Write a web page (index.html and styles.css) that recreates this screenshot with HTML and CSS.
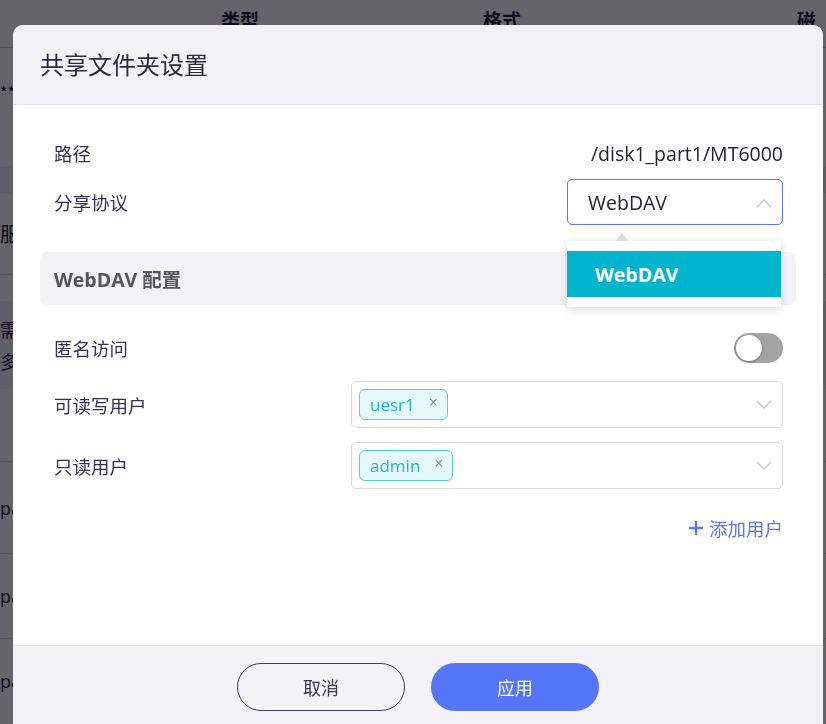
FILE: index.html
```html
<!DOCTYPE html>
<html lang="zh">
<head>
<meta charset="utf-8">
<title>共享文件夹设置</title>
<link rel="stylesheet" href="styles.css">
</head>
<body>
<div class="page">
  <div class="thead">
    <span class="th th-type">类型</span>
    <span class="th th-fmt">格式</span>
    <span class="th th-disk">磁</span>
  </div>
  <div class="bg-row bg-r1"><span class="stars">**</span></div>
  <div class="bg-band"></div>
  <div class="bg-row bg-r2"><span class="big">服</span></div>
  <div class="bg-gap"></div>
  <div class="bg-info"><span>需</span><span>多</span></div>
  <div class="bg-row bg-r3"></div>
  <div class="bg-row bg-pa"><span>pa</span></div>
  <div class="bg-row bg-pa2"><span>pa</span></div>
  <div class="bg-row bg-pa3"><span>pa</span></div>
</div>
<div class="mask"></div>

<div class="modal">
  <div class="modal-header">共享文件夹设置</div>
  <div class="modal-body">
    <div class="row row-path">
      <span class="label">路径</span>
      <span class="value">/disk1_part1/MT6000</span>
    </div>
    <div class="row row-proto">
      <span class="label">分享协议</span>
      <div class="select open">
        <span class="select-text">WebDAV</span>
        <svg class="chev" width="16" height="10" viewBox="0 0 16 10"><path d="M1 9 L8 2 L15 9" fill="none" stroke="#c6c6cf" stroke-width="1.4"/></svg>
        <div class="dropdown">
          <span class="dd-arrow"></span>
          <div class="dd-item">WebDAV</div>
        </div>
      </div>
    </div>
    <div class="section">WebDAV 配置</div>
    <div class="row row-anon">
      <span class="label">匿名访问</span>
      <span class="toggle"><span class="knob"></span></span>
    </div>
    <div class="row row-users">
      <span class="label">可读写用户</span>
      <div class="multi">
        <span class="tag">uesr1<span class="x">×</span></span>
        <svg class="chev-down" width="16" height="10" viewBox="0 0 16 10"><path d="M1 1 L8 8 L15 1" fill="none" stroke="#c6c6cf" stroke-width="1.4"/></svg>
      </div>
    </div>
    <div class="row row-users row-ro">
      <span class="label">只读用户</span>
      <div class="multi">
        <span class="tag">admin<span class="x">×</span></span>
        <svg class="chev-down" width="16" height="10" viewBox="0 0 16 10"><path d="M1 1 L8 8 L15 1" fill="none" stroke="#c6c6cf" stroke-width="1.4"/></svg>
      </div>
    </div>
    <div class="row row-add">
      <span class="add">
        <svg width="16" height="16" viewBox="0 0 16 16"><path d="M8 1 V15 M1 8 H15" stroke="#5a78f5" stroke-width="2.4"/></svg>
        添加用户
      </span>
    </div>
  </div>
  <div class="modal-footer">
    <button class="btn btn-cancel">取消</button>
    <button class="btn btn-apply">应用</button>
  </div>
</div>
</body>
</html>
```

FILE: styles.css
```css
* { box-sizing: border-box; }
html, body {
  margin: 0;
  padding: 0;
  width: 826px;
  height: 724px;
  overflow: hidden;
  font-family: "Open Sans", "Noto Sans CJK SC", sans-serif;
  background: #ffffff;
}

/* background page */
.page {
  width: 826px;
  height: 724px;
  background: #fbfbfd;
  color: #222240;
  font-family: "Noto Sans CJK SC", sans-serif;
}
.thead {
  height: 48px;
  border-bottom: 1px solid #ccc;
  font-weight: 700;
  font-size: 19px;
  display: flex;
  align-items: flex-start;
  padding-top: 6px;
  white-space: nowrap;
}
.th-type { margin-left: 221px; }
.th-fmt { margin-left: 224px; }
.th-disk { margin-left: 276px; }
.bg-row {
  display: flex;
  align-items: center;
  font-size: 18px;
  color: #222240;
}
.bg-r1 { height: 119px; align-items: flex-start; padding-top: 32px; }
.stars { font-size: 16px; }
.bg-band { height: 26px; background: #ececf0; }
.bg-r2 { height: 82px; border-bottom: 1px solid #ddd; }
.big { font-size: 20px; }
.bg-gap { height: 26px; }
.bg-info {
  height: 88px;
  background: #eef0f8;
  display: flex;
  flex-direction: column;
  justify-content: center;
  font-size: 18px;
  line-height: 32px;
}
.bg-r3 { height: 73px; border-bottom: 1px solid #ddd; }
.bg-pa, .bg-pa2 { height: 92px; border-bottom: 1px solid #ddd; }
.bg-pa2 { height: 85px; }
.bg-pa3 { height: 83px; }
.bg-row.bg-pa, .bg-row.bg-pa2, .bg-row.bg-pa3 { font-family: "Open Sans", sans-serif; }

.mask {
  position: fixed;
  inset: 0;
  background: rgba(2, 0, 10, 0.6);
}

/* modal */
.modal {
  position: absolute;
  left: 13px;
  top: 25px;
  width: 810px;
  height: 720px;
  background: #ffffff;
  border-radius: 10px;
  overflow: hidden;
  display: flex;
  flex-direction: column;
}
.modal-header {
  height: 80px;
  flex: none;
  background: #f2f2f7;
  border-bottom: 1px solid #e4e4ec;
  font-family: "Noto Sans CJK SC", sans-serif;
  font-size: 24px;
  color: #2a2a48;
  padding-left: 27px;
  display: flex;
  align-items: center;
  padding-bottom: 2px;
}
.modal-body {
  height: 540px;
  flex: none;
  padding: 36px 27px 0;
}
.row {
  display: flex;
  align-items: center;
  justify-content: space-between;
  padding: 0 13px 0 14px;
}
.label {
  font-family: "Noto Sans CJK SC", sans-serif;
  font-size: 18.5px;
  color: #30305a;
}
.row-path { height: 24px; }
.value {
  font-size: 19.5px;
  color: #222236;
}
.row-proto { height: 46px; margin-top: 14px; }
.select {
  position: relative;
  width: 216px;
  height: 46px;
  border: 1px solid #5a78f5;
  border-radius: 5px;
  display: flex;
  align-items: center;
  justify-content: space-between;
  padding: 0 10px 0 20px;
}
.select-text { font-size: 19.5px; color: #222236; }
.chev { margin-top: 2px; }
.dropdown {
  position: absolute;
  left: -1px;
  top: 61px;
  width: 214px;
  padding: 10px 0;
  background: #fff;
  box-shadow: 0 2px 8px rgba(0, 0, 0, 0.16);
  border-radius: 2px;
  z-index: 5;
}
.dd-arrow {
  position: absolute;
  left: 48px;
  top: -8px;
  width: 0;
  height: 0;
  border-left: 7px solid transparent;
  border-right: 7px solid transparent;
  border-bottom: 8px solid #dcdce2;
}
.dd-item {
  height: 46px;
  background: #00b4d0;
  color: #fff;
  font-weight: 700;
  font-size: 19.5px;
  display: flex;
  align-items: center;
  padding-left: 28px;
}
.section {
  margin-top: 27px;
  height: 53px;
  background: #f2f2f7;
  border-radius: 8px;
  display: flex;
  align-items: center;
  padding-left: 14px;
  font-size: 19.5px;
  font-weight: 700;
  color: #555558;
}
.row-anon { height: 30px; margin-top: 28px; }
.toggle {
  position: relative;
  width: 49px;
  height: 30px;
  border-radius: 15px;
  background: #a3a3a3;
  display: flex;
  align-items: center;
  padding-left: 2px;
}
.knob {
  width: 26px;
  height: 26px;
  border-radius: 50%;
  background: #fff;
  box-shadow: 0 1px 3px rgba(0, 0, 0, 0.3);
}
.row-users { height: 47px; margin-top: 18px; }
.row-ro { margin-top: 14px; }
.multi {
  width: 432px;
  height: 47px;
  border: 1px solid #d9d9de;
  border-radius: 5px;
  display: flex;
  align-items: center;
  justify-content: space-between;
  padding: 0 10px 0 7px;
}
.tag {
  height: 31px;
  border: 1px solid #4fd0e3;
  background: #e6f8fc;
  border-radius: 6px;
  color: #1db8d1;
  font-size: 17px;
  display: flex;
  align-items: center;
  padding: 0 9px 0 10px;
}
.x {
  margin-left: 14px;
  color: #8a8a94;
  font-size: 16px;
  margin-top: -6px;
}
.row-add { height: 24px; margin-top: 27px; justify-content: flex-end; }
.add {
  display: flex;
  align-items: center;
  gap: 5px;
  font-family: "Noto Sans CJK SC", sans-serif;
  font-size: 18.5px;
  color: #5a78f5;
}
.modal-footer {
  flex: 1;
  background: #f2f2f7;
  border-top: 1px solid #e4e4ec;
  display: flex;
  justify-content: center;
  align-items: flex-start;
  gap: 26px;
  padding-top: 17px;
}
.btn {
  width: 168px;
  height: 48px;
  border-radius: 24px;
  font-family: "Noto Sans CJK SC", sans-serif;
  font-size: 18px;
  cursor: pointer;
}
.btn-cancel {
  background: transparent;
  border: 1px solid #3a3a6a;
  color: #3a3a5a;
}
.btn-apply {
  background: #5676f8;
  border: none;
  color: #ffffff;
}
```
